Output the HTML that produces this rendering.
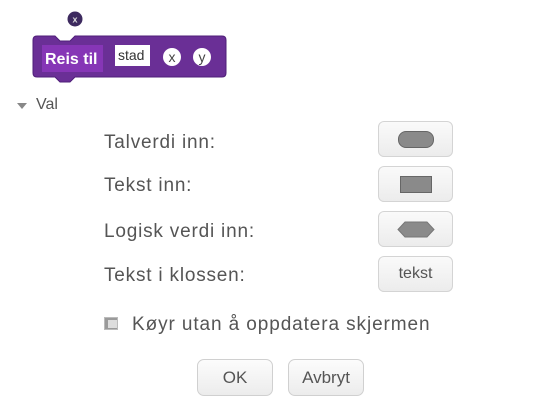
<!DOCTYPE html>
<html><head><meta charset="utf-8"><style>
body{margin:0;width:545px;height:412px;background:#fff;font-family:"Liberation Sans",sans-serif;position:relative;overflow:hidden}
.a{position:absolute}
.lbl{position:absolute;left:104px;font-size:19px;letter-spacing:0.8px;color:#555}
.btn{position:absolute;left:378px;width:75px;height:36px;border:1px solid #d4d4d4;border-radius:6px;background:linear-gradient(#fafafa,#ececec);box-sizing:border-box}
.cb{position:absolute;width:76px;height:37px;top:359px;border:1px solid #d0d0d0;border-radius:7px;background:linear-gradient(#fcfcfc,#ececec);box-sizing:border-box;font-size:17px;color:#555;text-align:center;line-height:35px}
</style></head><body>
<svg class="a" style="left:0;top:0" width="240" height="120">
<circle cx="75" cy="19" r="7.5" fill="#3d2a5f"/>
<text x="75" y="22.5" font-size="9" font-weight="bold" fill="#ddd" text-anchor="middle" font-family="Liberation Sans">x</text>
<path d="M37 36 H55 L60 41 H70 L75 36 H222 Q226 36 226 40 V73 Q226 77 222 77 H75 L70 82 H60 L55 77 H37 Q33 77 33 73 V40 Q33 36 37 36 Z" fill="#6a2f96" stroke="#4f1f78" stroke-width="1"/>
<rect x="42" y="45" width="61" height="27" fill="#8636b6"/>
<text x="45" y="64" font-size="16" font-weight="bold" fill="#fff" font-family="Liberation Sans">Reis til</text>
<rect x="115" y="45" width="35" height="21" fill="#fff"/>
<text x="118" y="60" font-size="14" fill="#333" font-family="Liberation Sans">stad</text>
<circle cx="172" cy="57" r="9" fill="#fff"/>
<text x="172" y="62" font-size="14" fill="#444" text-anchor="middle" font-family="Liberation Sans">x</text>
<circle cx="202" cy="57" r="9" fill="#fff"/>
<text x="202" y="62" font-size="14" fill="#444" text-anchor="middle" font-family="Liberation Sans">y</text>
<path d="M17 103 L27 103 L22 109 Z" fill="#888"/>
</svg>
<div class="a" style="left:36px;top:96px;font-size:16px;color:#555">Val</div>
<div class="lbl" style="top:132px">Talverdi inn:</div>
<div class="lbl" style="top:175px">Tekst inn:</div>
<div class="lbl" style="top:221px">Logisk verdi inn:</div>
<div class="lbl" style="top:265px">Tekst i klossen:</div>
<div class="btn" style="top:121px"><div class="a" style="left:19px;top:9px;width:36px;height:17px;border-radius:8px;background:#8a8a8a;border:1px solid #666;box-sizing:border-box"></div></div>
<div class="btn" style="top:166px"><div class="a" style="left:21px;top:9px;width:32px;height:17px;background:#8a8a8a;border:1px solid #666;box-sizing:border-box"></div></div>
<div class="btn" style="top:211px"><svg class="a" style="left:18px;top:9px" width="38" height="17"><path d="M8 1 H30 L37 8.5 L30 16 H8 L1 8.5 Z" fill="#8a8a8a" stroke="#777"/></svg></div>
<div class="btn" style="top:256px;font-size:16px;color:#555;text-align:center;line-height:34px">tekst</div>
<div class="a" style="left:104px;top:317px;width:14px;height:13px;background:#9a9a9a;border:1px solid #bbb;box-sizing:border-box"><div style="margin:2px 0 0 3px;width:9px;height:8px;background:#ddd"></div></div>
<div class="a" style="left:132px;top:314px;font-size:19px;letter-spacing:0.9px;color:#555">Køyr utan å oppdatera skjermen</div>
<div class="cb" style="left:197px">OK</div>
<div class="cb" style="left:288px">Avbryt</div>
</body></html>
